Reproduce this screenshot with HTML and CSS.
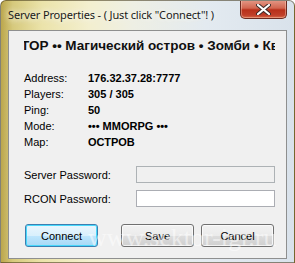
FILE: index.html
```html
<!DOCTYPE html>
<html lang="en">
<head>
  <meta charset="UTF-8">
  <meta name="viewport" content="width=device-width, initial-scale=1.0">
  <title>Server Properties</title>
  <link rel="stylesheet" href="styles.css">
</head>
<body>
  <div class="window">
    <div class="titlebar">
      <span class="title">Server Properties - ( Just click "Connect"! )</span>
      <button class="close" type="button" aria-label="Close">
        <svg width="15" height="11" viewBox="0 0 15 11">
          <path d="M2 1 L13 10 M13 1 L2 10" stroke="#3a2a28" stroke-width="4" stroke-linecap="round"/>
          <path d="M2 1 L13 10 M13 1 L2 10" stroke="#fff" stroke-width="2.2" stroke-linecap="round"/>
        </svg>
      </button>
    </div>
    <main class="client">
      <div class="banner"><span>ТОР •• Магический остров • Зомби • Квест</span></div>

      <div class="info">
        <span class="label">Address:</span><span class="value">176.32.37.28:7777</span>
        <span class="label">Players:</span><span class="value">305 / 305</span>
        <span class="label">Ping:</span><span class="value">50</span>
        <span class="label">Mode:</span><span class="value">••• MMORPG •••</span>
        <span class="label">Map:</span><span class="value">ОСТРОВ</span>
      </div>

      <div class="passwords">
        <label class="pw-row">
          <span class="pw-label">Server Password:</span>
          <input type="password" class="pw-input" disabled>
        </label>
        <label class="pw-row">
          <span class="pw-label">RCON Password:</span>
          <input type="password" class="pw-input">
        </label>
      </div>

      <div class="buttons">
        <button type="button" class="btn btn-default">Connect</button>
        <button type="button" class="btn btn-save">Save</button>
        <button type="button" class="btn">Cancel</button>
      </div>
    </main>
    <div class="watermark">www.sektor-igr.ru</div>
  </div>
</body>
</html>
```

FILE: styles.css
```css
body {
  margin: 0;
  padding: 0;
  font-family: "Liberation Sans", Arial, sans-serif;
}
.window {
  position: relative;
  width: 295px;
  height: 263px;
  box-sizing: border-box;
  border: 1px solid rgba(60, 50, 20, 0.55);
  border-radius: 6px 6px 0 0;
  background: linear-gradient(90deg, #bba64c 0%, #d6c97c 4%, #ebe3aa 14%, #f3efcf 30%, #eeefe4 45%, #e3eaf0 70%, #d9e2eb 100%);
  overflow: hidden;
}
.titlebar {
  display: flex;
  justify-content: space-between;
  align-items: flex-start;
  height: 29px;
}
.title {
  padding: 6px 0 0 7px;
  font-family: "Noto Sans", "Open Sans", sans-serif;
  font-size: 11px;
  line-height: 16px;
  color: #1a1a1a;
  letter-spacing: -0.15px;
  text-shadow: 0 0 6px #fff, 0 0 8px #fffbe0;
}
.close {
  display: flex;
  align-items: center;
  justify-content: center;
  width: 47px;
  height: 19px;
  margin: -1px 7px 0 0;
  padding: 0;
  border: 1px solid #6b2a20;
  border-top: none;
  border-radius: 0 0 5px 5px;
  background: linear-gradient(#e49a88 0%, #d26650 45%, #b8301a 55%, #c0402a 85%, #d86a48 100%);
  box-shadow: inset 0 0 0 1px rgba(255, 220, 200, 0.4);
}
.client {
  display: block;
  height: 229px;
  box-sizing: border-box;
  margin: 0 7px;
  padding: 0 11px 0 15px;
  background: #f0f0f0;
  border: 1px solid #8e8f8f;
  font-size: 11px;
  color: #000;
}
.banner {
  margin-top: 6px;
  height: 18px;
  overflow: hidden;
  white-space: nowrap;
  font-size: 13.5px;
  font-weight: bold;
  line-height: 18px;
  color: #101010;
}
.banner span {
  display: inline-block;
  margin-left: -3px;
}
.info {
  display: grid;
  grid-template-columns: 64px 1fr;
  grid-auto-rows: 16px;
  margin-top: 15px;
  line-height: 16px;
}
.value {
  font-weight: bold;
}
.passwords {
  display: flex;
  flex-direction: column;
  gap: 7px;
  margin-top: 16px;
}
.pw-row {
  display: flex;
  align-items: center;
}
.pw-label {
  width: 112px;
}
.pw-input {
  width: 139px;
  height: 17px;
  box-sizing: border-box;
  margin: 0;
  padding: 0 2px;
  border: 1px solid #abadb3;
  background: #fff;
  font-size: 11px;
}
.pw-input:disabled {
  background: #f0f0f0;
  border-color: #adb2b5;
}
.buttons {
  display: flex;
  gap: 7px;
  margin-top: 17px;
  padding-left: 1px;
}
.btn {
  width: 73px;
  height: 23px;
  padding: 0;
  border: 1px solid #707070;
  border-radius: 3px;
  background: linear-gradient(#f2f2f2 0%, #ebebeb 50%, #dddddd 51%, #cfcfcf 100%);
  box-shadow: inset 0 0 0 1px rgba(255, 255, 255, 0.7);
  font-family: "Liberation Sans", Arial, sans-serif;
  font-size: 11px;
  color: #000;
}
.btn-default {
  border-color: #3c7fb1;
  background: linear-gradient(#eaf6fd 0%, #d9f0fc 50%, #bee6fd 51%, #a7d9f5 100%);
  box-shadow: inset 0 0 0 1px #48d8fb;
}
.btn-save {
  margin-left: 16px;
}
.watermark {
  position: absolute;
  left: 87px;
  top: 222px;
  font-family: "Liberation Serif", "Times New Roman", serif;
  font-size: 26px;
  line-height: 30px;
  color: rgba(255, 255, 255, 0.5);
  pointer-events: none;
}
```
